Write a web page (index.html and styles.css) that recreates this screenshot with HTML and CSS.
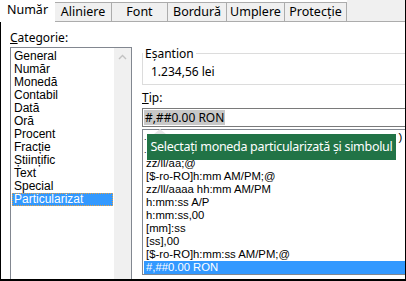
FILE: index.html
```html
<!DOCTYPE html>
<html lang="ro">
<head>
<meta charset="utf-8">
<link rel="stylesheet" href="styles.css">
</head>
<body>
<div class="window">
  <div class="tabs">
    <div class="tab active w1">Număr</div>
    <div class="tab w2">Aliniere</div>
    <div class="tab w3">Font</div>
    <div class="tab w4">Bordură</div>
    <div class="tab w5">Umplere</div>
    <div class="tab w6">Protecție</div>
    <div class="tab-fill"></div>
  </div>
  <div class="panel">
    <div class="col-left">
      <div class="label"><u>C</u>ategorie:</div>
      <div class="listbox">
        <ul class="items">
          <li>General</li>
          <li>Număr</li>
          <li>Monedă</li>
          <li>Contabil</li>
          <li>Dată</li>
          <li>Oră</li>
          <li>Procent</li>
          <li>Fracție</li>
          <li>Științific</li>
          <li>Text</li>
          <li>Special</li>
          <li class="selected">Particularizat</li>
        </ul>
        <div class="scrollbar">
          <svg class="chev" width="9" height="6" viewBox="0 0 9 6"><path d="M1 5 L4.5 1.5 L8 5" fill="none" stroke="#c2c2c2" stroke-width="1.4"/></svg>
        </div>
      </div>
    </div>
    <div class="col-right">
      <fieldset class="sample">
        <legend>Eșantion</legend>
        <div class="sample-val">1.234,56 lei</div>
      </fieldset>
      <div class="label tip"><u>T</u>ip:</div>
      <div class="input"><span class="sel">#,##0.00 RON</span></div>
      <div class="fmt-wrap">
        <ul class="fmtlist">
          <li class="hidden-row"><span class="edge">.</span><span class="edge-r">)</span></li>
          <li class="hidden-row"><span class="edge">.</span></li>
          <li>zz/ll/aa;@</li>
          <li>[$-ro-RO]h:mm AM/PM;@</li>
          <li>zz/ll/aaaa hh:mm AM/PM</li>
          <li>h:mm:ss A/P</li>
          <li>h:mm:ss,00</li>
          <li>[mm]:ss</li>
          <li>[ss],00</li>
          <li>[$-ro-RO]h:mm:ss AM/PM;@</li>
          <li class="selected">#,##0.00 RON</li>
        </ul>
        <div class="tooltip">Selectați moneda particularizată și simbolul</div>
      </div>
    </div>
  </div>
</div>
</body>
</html>
```

FILE: styles.css
```css
* { box-sizing: border-box; }
html, body {
  margin: 0;
  padding: 0;
  width: 406px;
  height: 281px;
  overflow: hidden;
  background: #fff;
}
body {
  font-family: "Noto Sans", "Open Sans", sans-serif;
  font-size: 12px;
  color: #000;
}
.window {
  width: 406px;
  height: 281px;
  border-right: 1px solid #000;
  border-bottom: 2px solid #000;
  display: flex;
  flex-direction: column;
  overflow: hidden;
}
.tabs {
  display: flex;
  height: 22px;
  flex: none;
}
.tab {
  margin-top: 2px;
  height: 20px;
  background: #f0f0f0;
  border: 1px solid #acacac;
  border-left: none;
  display: flex;
  align-items: center;
  justify-content: center;
  font-size: 12.5px;
  line-height: 15px;
  padding-bottom: 1px;
}
.tab.active {
  margin-top: 0;
  height: 22px;
  background: #fff;
  border: none;
  padding-bottom: 3px;
}
.w1 { width: 55px; }
.w2 { width: 57px; }
.w3 { width: 56px; }
.w4 { width: 59px; }
.w5 { width: 58px; }
.w6 { width: 62px; }
.tab-fill {
  flex: 1;
  background: #f0f0f0;
  border-bottom: 1px solid #acacac;
}
.panel {
  flex: 1;
  display: flex;
  gap: 10px;
  padding: 8px 0 0 9px;
  border-left: 1px solid #000;
  min-height: 0;
}
.label {
  line-height: 15px;
  height: 15px;
}
.col-left {
  width: 122px;
  flex: none;
  display: flex;
  flex-direction: column;
}
.listbox {
  margin-top: 2px;
  flex: 1;
  border: 1px solid #828790;
  border-bottom: none;
  display: flex;
}
.items, .fmtlist {
  font-family: "Liberation Sans", Arial, sans-serif;
  font-size: 11.3px;
}
.items {
  list-style: none;
  margin: 0;
  padding: 2px 1px 0 1px;
  flex: 1;
  font-size: 12px;
}
.items li {
  height: 13px;
  line-height: 13px;
  padding-left: 2px;
  white-space: nowrap;
}
.items li.selected {
  background: #3399ff;
  color: #fff;
  outline: 1px dotted #e8a040;
  outline-offset: -1px;
}
.scrollbar {
  width: 17px;
  background: #f0f0f0;
  display: flex;
  justify-content: center;
  padding-top: 6px;
}
.chev { display: block; }
.col-right {
  flex: 1;
  display: flex;
  flex-direction: column;
  min-width: 300px;
}
.sample {
  margin: 16px 0 0 0;
  padding: 0 0 5px 0;
  border: 1px solid #dcdcdc;
  width: 320px;
}
.sample legend {
  padding: 0 2px;
  margin-left: 0;
  line-height: 15px;
  font-size: 12px;
}
.sample-val {
  padding-left: 8px;
  line-height: 15px;
  margin-top: 3px;
}
.tip {
  margin-top: 5px;
}
.input {
  margin-top: 3px;
  height: 19px;
  width: 320px;
  border: 1px solid #7a7a7a;
  padding: 1px 1px;
  display: flex;
  align-items: center;
}
.sel {
  background: #c8c8c8;
  line-height: 15px;
  padding: 0 1px;
}
.fmt-wrap {
  position: relative;
  margin-top: 2px;
}
.fmtlist {
  list-style: none;
  margin: 0;
  padding: 1px 0 1px 1px;
  width: 320px;
  height: 146px;
  border: 1px solid #828790;
  overflow: hidden;
}
.fmtlist li {
  height: 13px;
  line-height: 13px;
  padding-left: 2px;
  white-space: nowrap;
}
.fmtlist li.hidden-row {
  display: flex;
  padding-left: 0;
}
.edge {
  font-size: 9px;
}
.edge-r {
  margin-left: 252px;
}
.fmtlist li.selected {
  background: #3399ff;
  color: #fff;
}
.tooltip {
  position: absolute;
  left: 5px;
  top: 5px;
  width: 249px;
  height: 26px;
  background: #217346;
  color: #fff;
  font-size: 12.5px;
  letter-spacing: -0.3px;
  line-height: 26px;
  text-align: center;
  white-space: nowrap;
}
.tooltip::before {
  content: "";
  position: absolute;
  left: 7px;
  top: -5px;
  border-left: 6px solid transparent;
  border-right: 6px solid transparent;
  border-bottom: 5px solid #e6e6e6;
}
```
